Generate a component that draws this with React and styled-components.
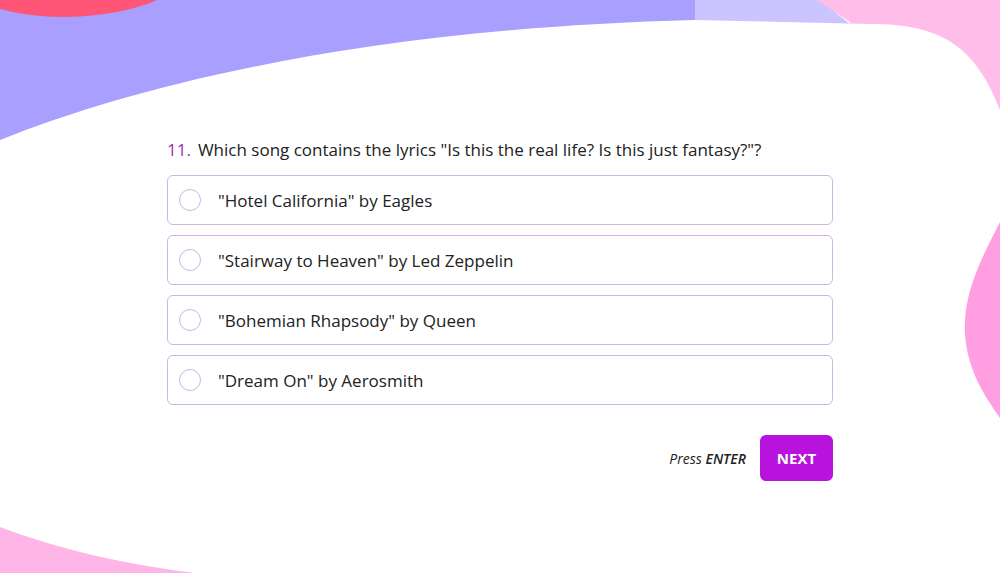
import React, { useState } from "react";
import styled, { createGlobalStyle } from "styled-components";

const GlobalStyle = createGlobalStyle`
  html, body {
    margin: 0;
    padding: 0;
    background: #ffffff;
    font-family: "Open Sans", "Noto Sans", sans-serif;
  }
`;

const Page = styled.div`
  position: relative;
  width: 1000px;
  height: 573px;
  overflow: hidden;
  display: flex;
  justify-content: center;
`;

const Backdrop = styled.svg`
  position: absolute;
  inset: 0;
  width: 100%;
  height: 100%;
  z-index: 0;
`;

const Quiz = styled.div`
  position: relative;
  z-index: 1;
  width: 666px;
  padding-top: 138px;
  display: flex;
  flex-direction: column;
`;

const Question = styled.div`
  font-size: 17px;
  line-height: 24px;
  color: #222;
  margin-bottom: 13px;

  span {
    color: #9d2fb6;
    margin-right: 7px;
  }
`;

const Options = styled.div`
  display: flex;
  flex-direction: column;
  gap: 10px;
`;

const Option = styled.label`
  display: flex;
  align-items: center;
  height: 50px;
  box-sizing: border-box;
  border: 1px solid ${({ $active }) => ($active ? "#b713dd" : "#cdb6e2")};
  border-radius: 6px;
  background: #fff;
  padding-left: 11px;
  cursor: pointer;
  font-size: 17px;
  color: #222;
`;

const Radio = styled.span`
  width: 22px;
  height: 22px;
  box-sizing: border-box;
  border-radius: 50%;
  border: 1px solid #cdb6e2;
  margin-right: 17px;
  background: ${({ $active }) => ($active ? "#b713dd" : "transparent")};
`;

const Footer = styled.div`
  display: flex;
  justify-content: flex-end;
  align-items: center;
  gap: 14px;
  margin-top: 30px;
`;

const Hint = styled.div`
  font-size: 14px;
  font-style: italic;
  color: #222;

  b {
    font-weight: 600;
  }
`;

const NextButton = styled.button`
  width: 73px;
  height: 46px;
  border: none;
  border-radius: 6px;
  background: #b713dd;
  color: #fff;
  font-family: inherit;
  font-weight: 700;
  font-size: 15px;
  cursor: pointer;
`;

const answers = [
  '"Hotel California" by Eagles',
  '"Stairway to Heaven" by Led Zeppelin',
  '"Bohemian Rhapsody" by Queen',
  '"Dream On" by Aerosmith',
];

const App = () => {
  const [picked, setPicked] = useState(null);

  return (
    <Page>
      <GlobalStyle />
      <Backdrop viewBox="0 0 1000 573" preserveAspectRatio="none">
        <rect x="0" y="0" width="700" height="170" fill="#a89ffe" />
        <path d="M695 0 H820 L870 40 H695 Z" fill="#cbc4fe" />
        <path d="M817 0 H1000 V240 H860 L850 22 Z" fill="#ffbdea" />
        <path d="M0 0 H157 C130 12 92 17 62 17 C36 17 16 13 0 9 Z" fill="#ff5577" />
        <path d="M0 140 C150 80 380 28 695 20 L870 24 C940 24 975 45 1000 110 V573 H0 Z" fill="#ffffff" />
        <path d="M1000 222 C985 252 962 292 965 335 C968 372 985 396 1000 418 Z" fill="#ff9ee0" />
        <path d="M0 527 C60 550 130 565 195 573 H0 Z" fill="#ffb5e6" />
      </Backdrop>
      <Quiz>
        <Question>
          <span>11.</span>Which song contains the lyrics "Is this the real life? Is this just fantasy?"?
        </Question>
        <Options>
          {answers.map((a, i) => (
            <Option key={a} $active={picked === i} onClick={() => setPicked(i)}>
              <Radio $active={picked === i} />
              {a}
            </Option>
          ))}
        </Options>
        <Footer>
          <Hint>
            Press <b>ENTER</b>
          </Hint>
          <NextButton>NEXT</NextButton>
        </Footer>
      </Quiz>
    </Page>
  );
};

export default App;
